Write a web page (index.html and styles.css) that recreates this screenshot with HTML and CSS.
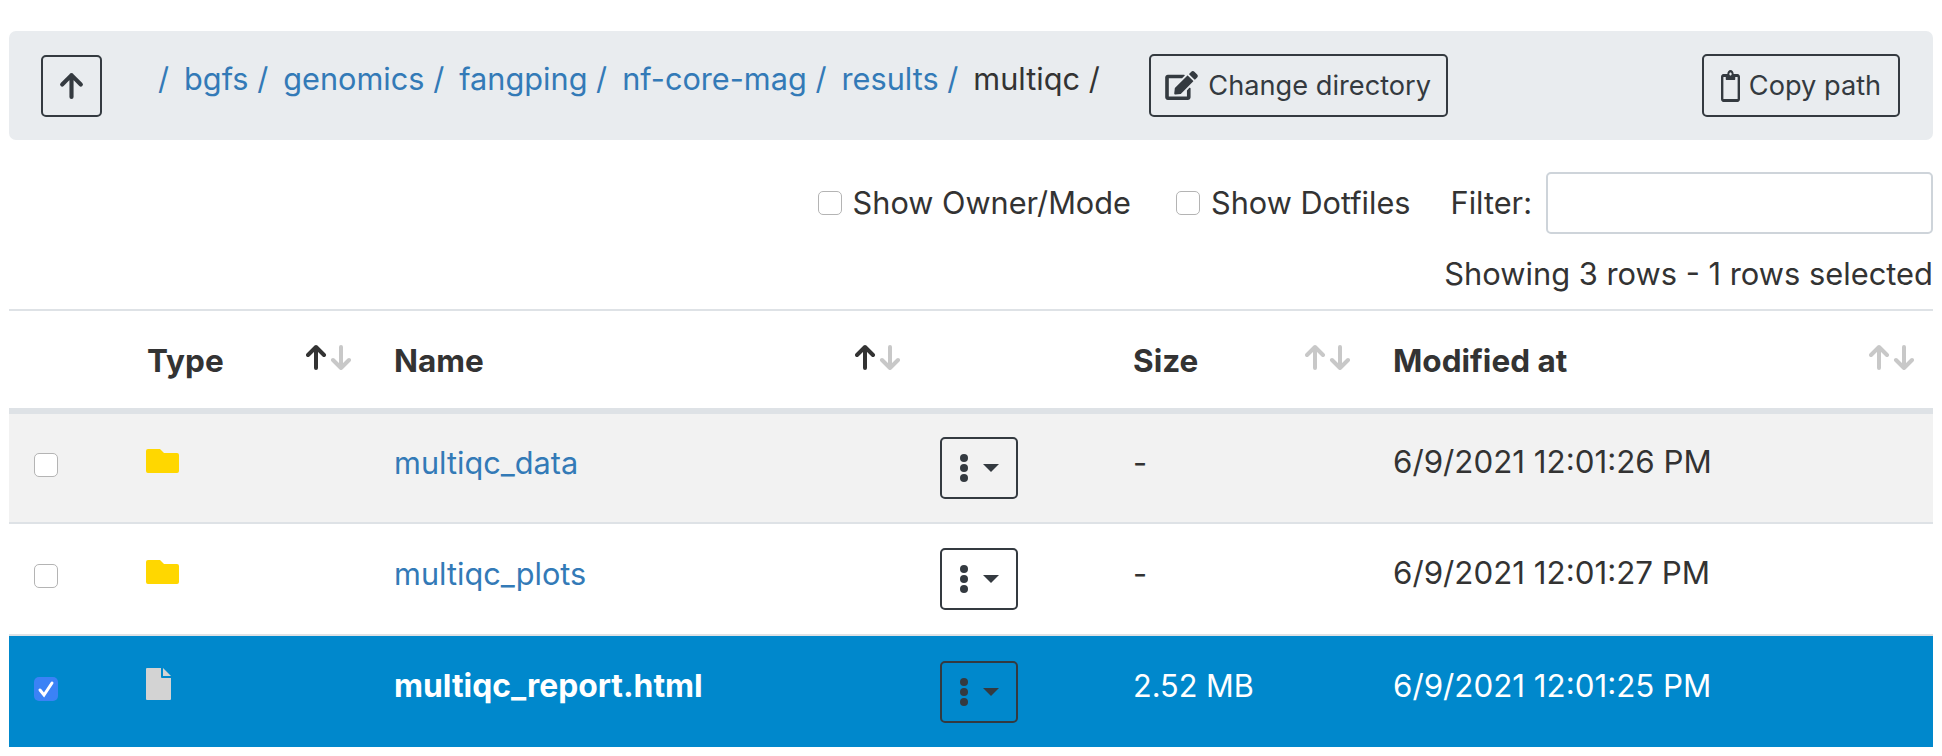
FILE: index.html
```html
<!DOCTYPE html>
<html lang="en">
<head>
  <meta charset="UTF-8">
  <title>Files</title>
  <link rel="stylesheet" href="styles.css">
</head>
<body>
  <div class="path-bar">
    <button class="btn btn-up" type="button">
      <svg class="icon-up" viewBox="0 0 24 28"><path d="M12 25V4M3 13l9-9 9 9"/></svg>
    </button>
    <div class="crumbs">
      <a class="crumb" href="#">/</a>
      <a class="crumb" href="#">bgfs /</a>
      <a class="crumb" href="#">genomics /</a>
      <a class="crumb" href="#">fangping /</a>
      <a class="crumb" href="#">nf-core-mag /</a>
      <a class="crumb" href="#">results /</a>
      <span class="crumb">multiqc /</span>
    </div>
    <button class="btn btn-change" type="button">
      <svg class="icon-edit" viewBox="0 0 576 512"><path d="M402.6 83.2l90.2 90.2c3.8 3.8 3.8 10 0 13.8L274.4 405.6l-92.8 10.3c-12.4 1.4-22.9-9.1-21.5-21.5l10.3-92.8L388.8 83.2c3.8-3.8 10-3.8 13.8 0zm162-22.9l-48.8-48.8c-15.2-15.2-39.9-15.2-55.2 0l-35.4 35.4c-3.8 3.8-3.8 10 0 13.8l90.2 90.2c3.8 3.8 10 3.8 13.8 0l35.4-35.4c15.2-15.3 15.2-40 0-55.2zM384 346.2V448H64V128h229.8c3.2 0 6.2-1.3 8.5-3.5l40-40c7.6-7.6 2.2-20.5-8.5-20.5H48C21.5 64 0 85.5 0 112v352c0 26.5 21.5 48 48 48h352c26.5 0 48-21.5 48-48V306.2c0-10.7-12.9-16-20.5-8.5l-40 40c-2.2 2.3-3.5 5.3-3.5 8.5z"/></svg>
      Change directory
    </button>
    <button class="btn btn-copy" type="button">
      <svg class="icon-clip" viewBox="0 0 384 512" preserveAspectRatio="none"><path d="M336 64h-80c0-35.3-28.7-64-64-64s-64 28.7-64 64H48C21.5 64 0 85.5 0 112v352c0 26.5 21.5 48 48 48h288c26.5 0 48-21.5 48-48V112c0-26.5-21.5-48-48-48zM192 40c13.3 0 24 10.7 24 24s-10.7 24-24 24-24-10.7-24-24 10.7-24 24-24zm144 418c0 3.3-2.7 6-6 6H54c-3.3 0-6-2.7-6-6V118c0-3.3 2.7-6 6-6h42v36c0 6.6 5.4 12 12 12h168c6.6 0 12-5.4 12-12v-36h42c3.3 0 6 2.7 6 6z"/></svg>
      Copy path
    </button>
  </div>

  <div class="options">
    <label class="check-label owner"><span class="check"></span>Show Owner/Mode</label>
    <label class="check-label"><span class="check"></span>Show Dotfiles</label>
    <label class="filter-label"><span class="filter-text">Filter:</span><input class="filter" type="text"></label>
  </div>
  <div class="info">Showing 3 rows - 1 rows selected</div>

  <table class="files">
    <colgroup>
      <col class="c-check"><col class="c-type"><col class="c-name"><col class="c-action"><col class="c-size"><col class="c-date">
    </colgroup>
    <thead>
      <tr>
        <th></th>
        <th><div class="th-in">Type
          <svg class="sort" viewBox="0 0 45 26"><path class="on" d="M10 24V3M2 11l8-8 8 8"/><path class="off" d="M35 3v21M27 16l8 8 8-8"/></svg>
        </div></th>
        <th><div class="th-in">Name
          <svg class="sort" viewBox="0 0 45 26"><path class="on" d="M10 24V3M2 11l8-8 8 8"/><path class="off" d="M35 3v21M27 16l8 8 8-8"/></svg>
        </div></th>
        <th></th>
        <th><div class="th-in">Size
          <svg class="sort" viewBox="0 0 45 26"><path class="off" d="M10 24V3M2 11l8-8 8 8"/><path class="off" d="M35 3v21M27 16l8 8 8-8"/></svg>
        </div></th>
        <th><div class="th-in">Modified at
          <svg class="sort" viewBox="0 0 45 26"><path class="off" d="M10 24V3M2 11l8-8 8 8"/><path class="off" d="M35 3v21M27 16l8 8 8-8"/></svg>
        </div></th>
      </tr>
    </thead>
    <tbody>
      <tr class="odd">
        <td><span class="check"></span></td>
        <td><svg class="icon-folder" viewBox="0 0 33 24"><path d="M2 0h12l4 4h13a2 2 0 0 1 2 2v16a2 2 0 0 1-2 2H2a2 2 0 0 1-2-2V2a2 2 0 0 1 2-2z"/></svg></td>
        <td><a href="#">multiqc_data</a></td>
        <td class="action"><button class="btn btn-menu" type="button"><svg class="icon-dots" viewBox="0 0 8 28"><circle cx="4" cy="4" r="4"/><circle cx="4" cy="14" r="4"/><circle cx="4" cy="24" r="4"/></svg><span class="caret"></span></button></td>
        <td>-</td>
        <td class="date">6/9/2021 12:01:26 PM</td>
      </tr>
      <tr>
        <td><span class="check"></span></td>
        <td><svg class="icon-folder" viewBox="0 0 33 24"><path d="M2 0h12l4 4h13a2 2 0 0 1 2 2v16a2 2 0 0 1-2 2H2a2 2 0 0 1-2-2V2a2 2 0 0 1 2-2z"/></svg></td>
        <td><a href="#">multiqc_plots</a></td>
        <td class="action"><button class="btn btn-menu" type="button"><svg class="icon-dots" viewBox="0 0 8 28"><circle cx="4" cy="4" r="4"/><circle cx="4" cy="14" r="4"/><circle cx="4" cy="24" r="4"/></svg><span class="caret"></span></button></td>
        <td>-</td>
        <td class="date">6/9/2021 12:01:27 PM</td>
      </tr>
      <tr class="selected">
        <td><span class="check checked"><svg viewBox="0 0 24 24"><path d="M6 13l4 5 8-12"/></svg></span></td>
        <td><svg class="icon-file" viewBox="0 0 25 32"><path d="M1 0h14v9a1 1 0 0 0 1 1h9v21a1 1 0 0 1-1 1H1a1 1 0 0 1-1-1V1a1 1 0 0 1 1-1z"/><path d="M17 0l8 8h-8z"/></svg></td>
        <td class="name-selected">multiqc_report.html</td>
        <td class="action"><button class="btn btn-menu" type="button"><svg class="icon-dots" viewBox="0 0 8 28"><circle cx="4" cy="4" r="4"/><circle cx="4" cy="14" r="4"/><circle cx="4" cy="24" r="4"/></svg><span class="caret"></span></button></td>
        <td>2.52 MB</td>
        <td class="date">6/9/2021 12:01:25 PM</td>
      </tr>
    </tbody>
  </table>
</body>
</html>
```

FILE: styles.css
```css
body {
  margin: 0;
  padding: 31px 9px 0;
  font-family: Inter, "Liberation Sans", sans-serif;
  font-size: 30.7px;
  color: #333;
  background: #fff;
}

a {
  color: #337ab7;
  text-decoration: none;
}

.btn {
  display: inline-flex;
  align-items: center;
  justify-content: center;
  font: inherit;
  font-size: 27.2px;
  color: #343a40;
  background: transparent;
  border: 2px solid #343a40;
  border-radius: 5px;
  padding: 0;
  cursor: pointer;
}

.path-bar {
  display: flex;
  align-items: center;
  height: 109px;
  background: #e9ecef;
  border-radius: 7px;
  padding: 0 33px 0 32px;
  box-sizing: border-box;
}

.btn-up {
  width: 61px;
  height: 62px;
  margin-right: 56px;
  flex: none;
}

.icon-up {
  width: 25px;
  height: 29px;
  fill: none;
  stroke: #343a40;
  stroke-width: 4;
  stroke-linecap: round;
  stroke-linejoin: round;
}

.crumbs {
  display: flex;
  gap: 15px;
  margin-top: -14px;
}

.btn-change {
  width: 299px;
  height: 63px;
  margin-left: 49px;
  gap: 10px;
}

.icon-edit {
  width: 33px;
  height: 29px;
  fill: #343a40;
}

.btn-copy {
  width: 198px;
  height: 63px;
  margin-left: auto;
  gap: 9px;
}

.icon-clip {
  width: 19px;
  height: 32px;
  fill: #343a40;
}

.options {
  display: flex;
  justify-content: flex-end;
  align-items: center;
  height: 62px;
  margin-top: 32px;
}

.check-label {
  display: flex;
  align-items: center;
  gap: 11px;
  margin-right: 40px;
  padding-bottom: 2px;
}

.check-label .check {
  margin-top: 2px;
}

.check-label.owner {
  margin-right: 45px;
}

.filter-label {
  display: flex;
  align-items: center;
  gap: 14px;
}

.filter-text {
  padding-bottom: 2px;
}

.filter {
  width: 387px;
  height: 62px;
  box-sizing: border-box;
  background: #fff;
  border: 2px solid #ced4da;
  border-radius: 5px;
}

.check {
  display: inline-block;
  vertical-align: middle;
  width: 24px;
  height: 24px;
  box-sizing: border-box;
  background: #fff;
  border: 1.5px solid #b4b4b4;
  border-radius: 5px;
}

.check.checked {
  background: #3b82f6;
  border: 0;
}

.check.checked svg {
  display: block;
  fill: none;
  stroke: #fff;
  stroke-width: 3;
  stroke-linecap: round;
}

.info {
  text-align: right;
  margin-top: 22px;
  height: 53px;
  line-height: 36px;
  font-size: 30.85px;
}

.files {
  width: 1924px;
  table-layout: fixed;
  border-collapse: collapse;
  border-top: 2px solid #dee2e6;
}

.c-check { width: 114px; }
.c-type { width: 247px; }
.c-name { width: 549px; }
.c-action { width: 190px; }
.c-size { width: 260px; }

.files th {
  height: 101px;
  padding: 2px 19px 0 24px;
  box-sizing: border-box;
  font-size: 31.5px;
  font-weight: 700;
  text-align: left;
  border-bottom: 6px solid #dee2e6;
}

.th-in {
  display: flex;
  justify-content: space-between;
  align-items: center;
}

.sort {
  width: 45px;
  height: 26px;
  margin-top: -8px;
  fill: none;
  stroke-width: 4;
  stroke-linecap: round;
  stroke-linejoin: round;
}

.sort .on { stroke: #333; }
.sort .off { stroke: #c8c8c8; }

.files td {
  height: 112px;
  box-sizing: border-box;
  padding: 0 0 12px 24px;
  border-bottom: 2px solid #dee2e6;
}

.files td:first-child {
  padding-left: 25px;
}

.files td.action {
  padding-bottom: 0;
}

.files td.date {
  font-size: 31.3px;
}

.files tbody tr:last-child td {
  border-bottom: 0;
}

.odd {
  background: #f2f2f2;
}

.selected {
  background: #0088cc;
  color: #fff;
}

.name-selected {
  font-size: 31.8px;
  font-weight: 700;
}

.icon-folder {
  display: block;
  width: 33px;
  height: 24px;
  fill: #ffd700;
  margin: -3px 0 0 -1px;
}

.icon-file {
  display: block;
  width: 25px;
  height: 32px;
  fill: #d3d3d3;
  margin: -3px 0 0 -1px;
}

.btn-menu {
  width: 78px;
  height: 62px;
  gap: 15px;
  margin-left: -3px;
  vertical-align: middle;
}

.icon-dots {
  width: 8px;
  height: 28px;
  fill: #343a40;
}

.caret {
  width: 0;
  height: 0;
  border-left: 8px solid transparent;
  border-right: 8px solid transparent;
  border-top: 8px solid #343a40;
}
```
